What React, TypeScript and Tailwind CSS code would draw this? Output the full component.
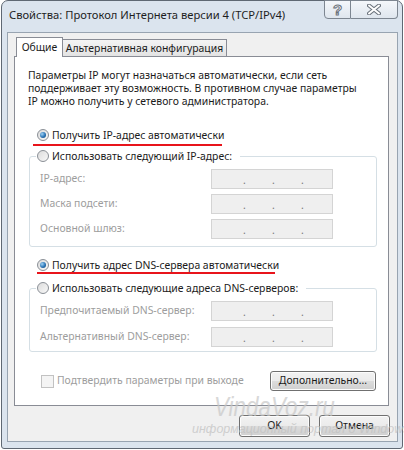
import React from "react";

const ff = "font-['Noto_Sans',sans-serif]";

function Radio({ checked }: { checked?: boolean }) {
  return (
    <span className="relative flex h-[12px] w-[12px] shrink-0 items-center justify-center rounded-full border border-[#8a8f96] bg-[linear-gradient(135deg,#dcdcdc,#f8f8f8)]">
      {checked ? (
        <span className="h-[6px] w-[6px] rounded-full bg-[radial-gradient(circle_at_35%_35%,#9fd2f5,#2a74b6_55%,#0d3d6e)]" />
      ) : null}
    </span>
  );
}

function IpBox() {
  return (
    <div className="flex h-[20px] w-[122px] items-end border border-[#d4d4d4] bg-[#efefef] pb-[2px] pl-[31px] leading-[12px] text-[#777]">
      <span className="w-[29px]">.</span>
      <span className="w-[29px]">.</span>
      <span>.</span>
    </div>
  );
}

function Field({ label }: { label: string }) {
  return (
    <div className="flex h-[20px] items-center pl-[10px]">
      <span className="w-[171px] whitespace-nowrap text-[#9d9d9d]">{label}</span>
      <IpBox />
    </div>
  );
}

function Button({ children, w, h }: { children: React.ReactNode; w: string; h: string }) {
  return (
    <div
      className={`${w} ${h} flex items-center justify-center whitespace-nowrap rounded-[3px] border border-[#707070] bg-[linear-gradient(#f2f2f2,#ebebeb_50%,#dddddd_50%,#cfcfcf)] text-[#1a1a1a] shadow-[inset_0_0_0_1px_#fcfcfc]`}
    >
      {children}
    </div>
  );
}

export default function App() {
  return (
    <div className={`relative h-[450px] w-[404px] overflow-hidden bg-white text-[10.4px] text-[#1a1a1a] ${ff}`}>
      <div className="ml-[1px] flex h-[449px] w-[402px] flex-col rounded-t-[7px] rounded-b-[3px] border border-[#5f6873] bg-[#dbe4ee]">
        {/* title bar */}
        <div className="flex h-[31px] shrink-0 items-start">
          <div className="whitespace-nowrap pl-[7px] pt-[6px] text-[11.2px] leading-[16px] text-[#1e1e1e]">
            Свойства: Протокол Интернета версии 4 (TCP/IPv4)
          </div>
          <div className="ml-auto mr-[4px] -mt-[1px] flex">
            <div className="flex h-[19px] w-[27px] items-center justify-center rounded-bl-[4px] border border-[#7d8691] bg-[linear-gradient(#f4f7fb,#dfe6ee)] font-['Liberation_Sans',sans-serif] text-[15px] font-bold leading-[15px] text-white [-webkit-text-stroke:1px_#6a727c]">
              ?
            </div>
            <div className="flex h-[19px] w-[47px] items-center justify-center rounded-br-[4px] border border-l-0 border-[#7d8691] bg-[linear-gradient(#f4f7fb,#dfe6ee)]">
              <svg width="14" height="11" viewBox="0 0 14 11">
                <path d="M2 1.5 L12 9.5 M12 1.5 L2 9.5" stroke="#6a727c" strokeWidth="4" strokeLinecap="round" />
                <path d="M2 1.5 L12 9.5 M12 1.5 L2 9.5" stroke="#ffffff" strokeWidth="2" strokeLinecap="round" />
              </svg>
            </div>
          </div>
        </div>

        {/* client area */}
        <div className="mb-[6px] ml-[5px] mr-[4px] flex flex-1 flex-col border border-[#98a4b1] bg-[#f0f0f0]">
          {/* tabs */}
          <div className="ml-[8px] flex h-[23px] items-end">
            <div className="relative z-10 flex h-[20px] w-[47px] translate-y-[1px] items-start justify-center whitespace-nowrap border border-b-0 border-[#898c95] bg-white pt-[2px] leading-[14px]">
              Общие
            </div>
            <div className="flex h-[17px] w-[164px] items-center justify-center whitespace-nowrap border border-l-0 border-b-0 border-[#898c95] bg-[linear-gradient(#f4f4f4,#e3e3e3)] leading-[14px]">
              Альтернативная конфигурация
            </div>
          </div>

          {/* panel */}
          <div className="ml-[6px] flex h-[350px] w-[375px] flex-col border border-[#898c95] bg-white">
            <div className="whitespace-nowrap pl-[13px] pt-[12px] leading-[13px]">
              <div>Параметры IP могут назначаться автоматически, если сеть</div>
              <div>поддерживает эту возможность. В противном случае параметры</div>
              <div>IP можно получить у сетевого администратора.</div>
            </div>

            <div className="relative ml-[22px] mt-[20px] flex h-[14px] items-center gap-[3px] whitespace-nowrap leading-[14px]">
              <Radio checked />
              <span>Получить IP-адрес автоматически</span>
              <span className="absolute left-[-4px] top-[16px] h-[2px] w-[189px] bg-[#e8141b]" />
            </div>

            <fieldset className="ml-[14px] mt-[7px] w-[348px] rounded-[3px] border border-[#d5dfe5] px-0 pb-[7px]">
              <legend className="ml-[6px] pl-[1px] pr-[8px]">
                <span className="flex h-[14px] items-center gap-[3px] whitespace-nowrap leading-[14px]">
                  <Radio />
                  <span>Использовать следующий IP-адрес:</span>
                </span>
              </legend>
              <div className="mt-[6px] flex flex-col gap-[5px]">
                <Field label="IP-адрес:" />
                <Field label="Маска подсети:" />
                <Field label="Основной шлюз:" />
              </div>
            </fieldset>

            <div className="relative ml-[22px] mt-[11px] flex h-[14px] items-center gap-[3px] whitespace-nowrap leading-[14px]">
              <Radio checked />
              <span>Получить адрес DNS-сервера автоматически</span>
              <span className="absolute left-[0px] top-[14px] h-[2px] w-[238px] bg-[#e8141b]" />
            </div>

            <fieldset className="ml-[14px] mt-[9px] w-[348px] rounded-[3px] border border-[#d5dfe5] px-0 pb-[4px]">
              <legend className="ml-[6px] pl-[1px] pr-[8px]">
                <span className="flex h-[14px] items-center gap-[3px] whitespace-nowrap leading-[14px]">
                  <Radio />
                  <span>Использовать следующие адреса DNS-серверов:</span>
                </span>
              </legend>
              <div className="mt-[6px] flex flex-col gap-[6px]">
                <Field label="Предпочитаемый DNS-сервер:" />
                <Field label="Альтернативный DNS-сервер:" />
              </div>
            </fieldset>

            <div className="mt-[19px] flex h-[20px] items-center pr-[12px]">
              <span className="ml-[26px] h-[13px] w-[13px] border border-[#c2c2c2] bg-[#f4f4f4]" />
              <span className="ml-[3px] whitespace-nowrap text-[#9d9d9d]">Подтвердить параметры при выходе</span>
              <div className="ml-auto">
                <Button w="w-[106px]" h="h-[20px]">Дополнительно...</Button>
              </div>
            </div>
          </div>

          {/* bottom buttons */}
          <div className="mr-[7px] mt-[9px] flex justify-end gap-[9px]">
            <Button w="w-[71px]" h="h-[22px]">OK</Button>
            <Button w="w-[71px]" h="h-[22px]">Отмена</Button>
          </div>
        </div>
      </div>

      {/* watermark overlay */}
      <div className="pointer-events-none absolute left-[214px] top-[392px] origin-left scale-x-[0.8] whitespace-nowrap font-['Liberation_Sans',sans-serif] text-[28px] italic leading-[30px] text-[#c8c8c8] opacity-70">
        VindaVoz.ru
      </div>
      <div className="pointer-events-none absolute left-[192px] top-[421px] whitespace-nowrap font-['Liberation_Sans',sans-serif] text-[12.5px] italic leading-[16px] text-[#c0c0c0] opacity-70">
        информационный портал о Windows
      </div>
    </div>
  );
}
